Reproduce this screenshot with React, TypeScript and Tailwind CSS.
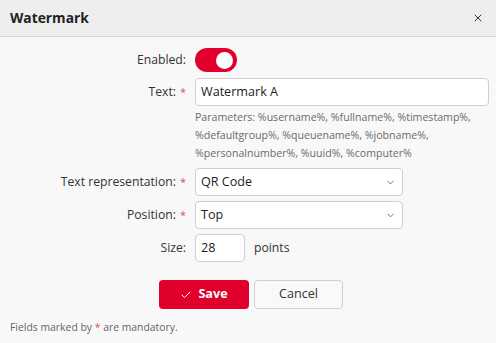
import React from "react";
import { ChevronDown, Check, X } from "lucide-react";

const font = { fontFamily: '"Open Sans", "Noto Sans", sans-serif' };

function Label({ text, req, cls }: { text: string; req?: boolean; cls?: string }) {
  return (
    <div className={"h-[28px] flex items-center justify-end text-[12.2px] text-[#333] pr-[1px] " + (cls ?? "")}>
      <span>{text}</span>
      {req && <span className="text-[#d9534f] ml-[4px] text-[11px]">*</span>}
    </div>
  );
}

export default function App() {
  return (
    <div className="w-[496px] h-[343px] bg-[#f8f8f8] overflow-hidden" style={font}>
      <div className="h-[37px] bg-[#eeeeee] border-b border-[#d6d6d6] flex items-center justify-between pl-[10px] pr-[12px]">
        <span className="text-[13.8px] font-bold text-[#222]">Watermark</span>
        <X size={12} strokeWidth={2} className="text-[#333]" />
      </div>
      <div className="pt-[11px] pr-[7px] grid grid-cols-[187px_1fr] gap-x-[8px]">
        <div className="h-[24px] flex items-center justify-end text-[12.2px] text-[#333] pr-[1px]">Enabled:</div>
        <div className="h-[24px] flex items-center">
          <div className="w-[42px] h-[24px] rounded-full bg-[#e0002b] flex items-center justify-end pr-[4px]">
            <div className="w-[17px] h-[17px] rounded-full bg-white" />
          </div>
        </div>

        <Label text="Text:" req cls="mt-[6px]" />
        <div className="mt-[6px] h-[28px] rounded-[4px] border border-[#cfcfcf] bg-white flex items-center px-[5px] text-[12.6px] text-[#222]">
          Watermark A
        </div>

        <div />
        <div className="mt-[2px] text-[10.6px] leading-[18px] text-[#6b6b6b]">
          Parameters: %username%, %fullname%, %timestamp%,
          <br />
          %defaultgroup%, %queuename%, %jobname%,
          <br />
          %personalnumber%, %uuid%, %computer%
        </div>

        <Label text="Text representation:" req cls="mt-[6px]" />
        <div className="mt-[6px] h-[28px] w-[208px] rounded-[4px] border border-[#cfcfcf] bg-white flex items-center justify-between pl-[5px] pr-[6px] text-[12.6px] text-[#222]">
          <span>QR Code</span>
          <ChevronDown size={11} strokeWidth={1.8} className="text-[#555]" />
        </div>

        <Label text="Position:" req cls="mt-[5px]" />
        <div className="mt-[5px] h-[28px] w-[208px] rounded-[4px] border border-[#cfcfcf] bg-white flex items-center justify-between pl-[5px] pr-[6px] text-[12.6px] text-[#222]">
          <span>Top</span>
          <ChevronDown size={11} strokeWidth={1.8} className="text-[#555]" />
        </div>

        <Label text="Size:" cls="mt-[5px]" />
        <div className="mt-[5px] h-[28px] flex items-center gap-[9px]">
          <div className="w-[50px] h-[28px] rounded-[4px] border border-[#cfcfcf] bg-white flex items-center px-[5px] text-[12.6px] text-[#222]">28</div>
          <span className="text-[12.2px] text-[#333]">points</span>
        </div>
      </div>
      <div className="mt-[18px] flex justify-center gap-[5px] pl-[6px]">
        <div className="w-[90px] h-[29px] rounded-[4px] bg-[#e0002b] flex items-center justify-center gap-[6px] text-white text-[12.6px] font-bold">
          <Check size={12} strokeWidth={2} />
          <span>Save</span>
        </div>
        <div className="w-[89px] h-[29px] rounded-[4px] border border-[#cfcfcf] bg-[#f9f9f9] flex items-center justify-center text-[12.6px] text-[#333]">
          Cancel
        </div>
      </div>
      <div className="mt-[10px] pl-[10px] text-[10.4px] leading-[16px] text-[#666]">
        Fields marked by <span className="text-[#d9534f]">*</span> are mandatory.
      </div>
    </div>
  );
}
